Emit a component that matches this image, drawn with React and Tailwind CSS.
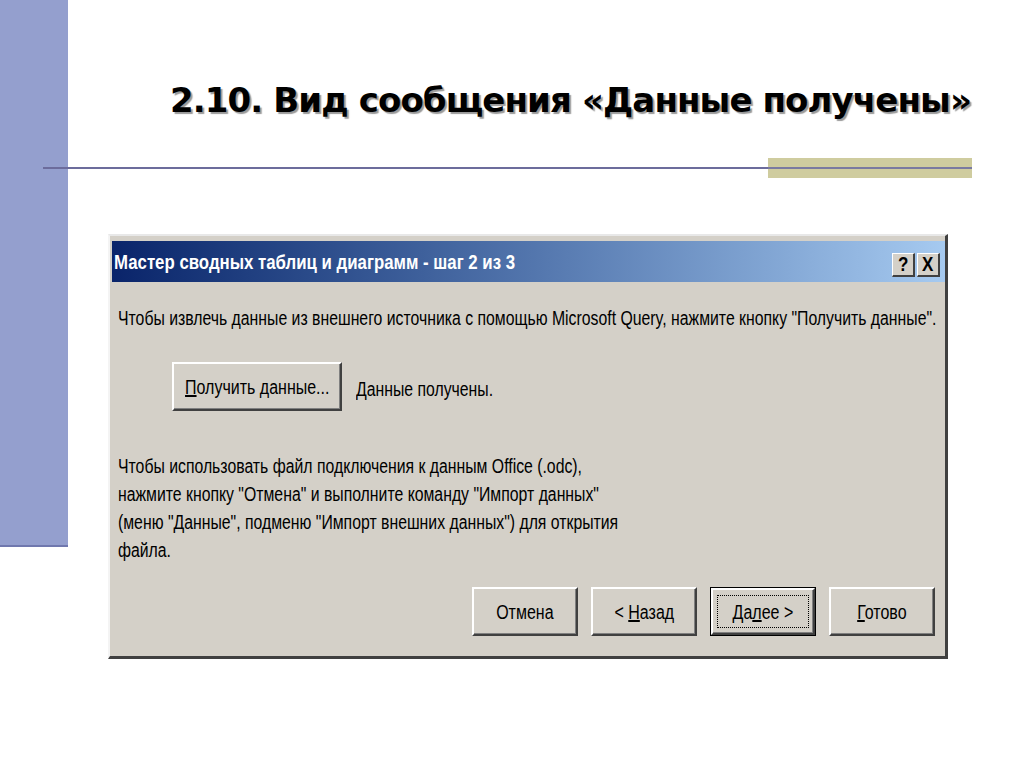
import React from "react";

const font = "font-['Liberation_Sans',Arial,sans-serif]";

// condensed dialog text (the original is a stretched bitmap font)
const Txt = ({ children, className = "scale-x-[0.79]" }) => (
  <span className={"inline-block whitespace-nowrap origin-left " + className}>
    {children}
  </span>
);

const WinButton = ({ children, focused = false, className = "" }) => {
  const label = <span className="inline-block scale-x-[0.8] whitespace-nowrap">{children}</span>;
  return (
    <div className={"h-[49px] text-[20px] text-black " + (focused ? "border border-black " : "") + className}>
      <div className="w-full h-full bg-[#d4d0c8] border-t-2 border-l-2 border-t-white border-l-white border-r-2 border-b-2 border-r-[#404040] border-b-[#404040] shadow-[inset_-1px_-1px_0_#808080] flex items-center justify-center">
        {focused ? (
          <div className="w-[calc(100%-8px)] h-[calc(100%-10px)] border border-dotted border-black flex items-center justify-center">
            {label}
          </div>
        ) : (
          label
        )}
      </div>
    </div>
  );
};

const CaptionButton = ({ children }) => (
  <div className="w-[23px] h-[24px] bg-[#d4d0c8] border-t border-l border-t-white border-l-white border-r-2 border-b-2 border-r-[#404040] border-b-[#404040] flex items-center justify-center text-[20px] font-bold leading-none text-black">
    <span className="inline-block scale-x-[0.85]">{children}</span>
  </div>
);

const App = () => {
  return (
    <div className={"w-[1024px] h-[768px] bg-white flex overflow-hidden " + font}>
      {/* slide side bar */}
      <div className="w-[68px] h-[547px] shrink-0 bg-[#949fce] border-b-2 border-b-[#7078ae]" />

      <div className="flex-1 flex flex-col">
        <h1 className="mt-[77px] pl-[102px] h-[46px] text-[34px] leading-[46px] font-bold text-black font-['DejaVu_Sans',sans-serif] tracking-[-0.9px] [text-shadow:2px_2px_1px_#9a9a9a] whitespace-nowrap">
          2.10. Вид сообщения «Данные получены»
        </h1>

        {/* rule with tan accent */}
        <div className="-ml-[25px] mt-[35px] w-[929px] h-[20px] flex items-center">
          <div className="flex-1 h-[2px] bg-[#6c6c9c]" />
          <div className="w-[204px] h-[20px] bg-[#cfcc9f] flex items-center">
            <div className="w-full h-[2px] bg-[#7a7aa0]" />
          </div>
        </div>

        {/* dialog */}
        <div className="ml-[40px] mt-[56px] w-[840px] h-[425px] bg-[#d4d0c8] border-t-2 border-l-2 border-t-[#e8e8e8] border-l-[#f4f4f4] border-r-[3px] border-b-[3px] border-r-[#404040] border-b-[#404040] pt-[5px] pl-[2px] flex flex-col">
          <div className="h-[41px] bg-gradient-to-r from-[#0a246a] to-[#a6caf0] flex items-center pl-[2px] pr-[5px]">
            <span className="text-white font-bold text-[20px]">
              <Txt className="scale-x-[0.84]">Мастер сводных таблиц и диаграмм - шаг 2 из 3</Txt>
            </span>
            <div className="ml-auto flex gap-[2px] mt-[6px]">
              <CaptionButton>?</CaptionButton>
              <CaptionButton>X</CaptionButton>
            </div>
          </div>

          <div className="flex-1 flex flex-col text-[20px] leading-[28px] text-black pl-[6px] pr-[10px]">
            <div className="mt-[22px]">
              <Txt>
                Чтобы извлечь данные из внешнего источника с помощью Microsoft Query, нажмите кнопку "Получить данные".
              </Txt>
            </div>

            <div className="mt-[30px] flex items-center ml-[54px]">
              <WinButton className="w-[170px]">
                <span className="underline">П</span>олучить данные...
              </WinButton>
              <div className="ml-[14px] mt-[4px]">
                <Txt>Данные получены.</Txt>
              </div>
            </div>

            <div className="mt-[41px] flex flex-col">
              <Txt>Чтобы использовать файл подключения к данным Office (.odc),</Txt>
              <Txt>нажмите кнопку "Отмена" и выполните команду "Импорт данных"</Txt>
              <Txt>(меню "Данные", подменю "Импорт внешних данных") для открытия</Txt>
              <Txt>файла.</Txt>
            </div>

            <div className="mt-[23px] flex justify-end gap-[13px]">
              <WinButton className="w-[106px]">Отмена</WinButton>
              <WinButton className="w-[106px]">
                &lt; <span className="underline">Н</span>азад
              </WinButton>
              <WinButton focused className="w-[106px]">
                <span className="underline">Д</span>а<span className="underline">л</span>ее &gt;
              </WinButton>
              <WinButton className="w-[106px]">
                <span className="underline">Г</span>отово
              </WinButton>
            </div>
          </div>
        </div>
      </div>
    </div>
  );
};

export default App;
